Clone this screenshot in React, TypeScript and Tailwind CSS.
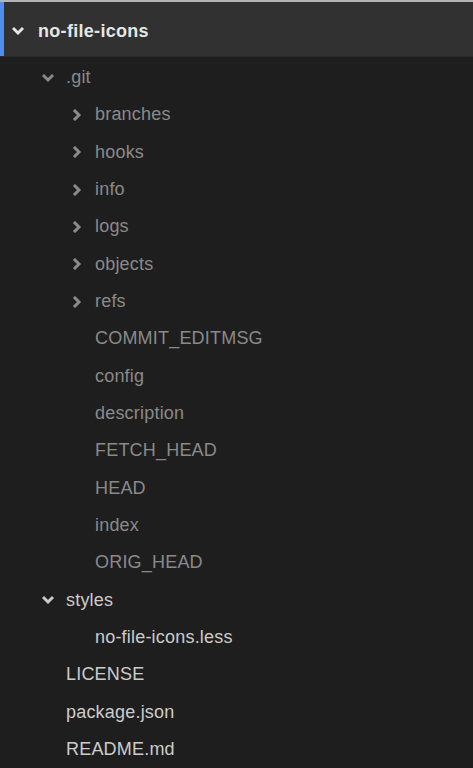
type Node = {
    name: string;
    level: number;
    folder?: 'open' | 'closed';
    dim?: boolean;
};

const rows: Node[] = [
    { name: '.git', level: 1, folder: 'open', dim: true },
    { name: 'branches', level: 2, folder: 'closed', dim: true },
    { name: 'hooks', level: 2, folder: 'closed', dim: true },
    { name: 'info', level: 2, folder: 'closed', dim: true },
    { name: 'logs', level: 2, folder: 'closed', dim: true },
    { name: 'objects', level: 2, folder: 'closed', dim: true },
    { name: 'refs', level: 2, folder: 'closed', dim: true },
    { name: 'COMMIT_EDITMSG', level: 2, dim: true },
    { name: 'config', level: 2, dim: true },
    { name: 'description', level: 2, dim: true },
    { name: 'FETCH_HEAD', level: 2, dim: true },
    { name: 'HEAD', level: 2, dim: true },
    { name: 'index', level: 2, dim: true },
    { name: 'ORIG_HEAD', level: 2, dim: true },
    { name: 'styles', level: 1, folder: 'open' },
    { name: 'no-file-icons.less', level: 2 },
    { name: 'LICENSE', level: 1 },
    { name: 'package.json', level: 1 },
    { name: 'README.md', level: 1 },
];

function Chevron({ open, className }: { open: boolean; className: string }) {
    return (
        <svg viewBox="0 0 12 12" className={className} fill="none" stroke="currentColor" strokeWidth="3" strokeLinecap="square">
            {open ? <polyline points="2,4 6,8 10,4" /> : <polyline points="4,2 8,6 4,10" />}
        </svg>
    );
}

export default function App() {
    return (
        <div className="w-[473px] h-[768px] overflow-hidden bg-[#1e1e1e] font-['Liberation_Sans',Arial,sans-serif] text-[18px]">
            <div className="h-[2px] bg-[#b4b4b4]" />
            <div className="relative h-[55px] bg-[#313131] border-b border-[#282828] flex items-center pt-[4px]">
                <div className="absolute left-0 top-0 bottom-0 w-[4px] bg-[#4d8ef0]" />
                <div className="w-[38px] flex justify-end pr-[14px]">
                    <Chevron open className="w-[12px] h-[12px] text-[#e6e6e6]" />
                </div>
                <span className="text-[#e6e6e6] font-bold tracking-[0.3px]">no-file-icons</span>
            </div>
            <div className="flex flex-col">
                {rows.map(row => {
                    const color = row.dim ? 'text-[#8a8a8a]' : 'text-[#cccccc]';
                    return (
                        <div key={row.name} className={`h-[37.33px] flex items-center pt-[4px] ${color}`}>
                            <div className={`${row.level === 1 ? 'w-[66px]' : 'w-[95px]'} flex justify-end pr-[12px] shrink-0`}>
                                {row.folder && (
                                    <Chevron open={row.folder === 'open'} className="w-[12px] h-[12px]" />
                                )}
                            </div>
                            <span className="tracking-[0.2px]">{row.name}</span>
                        </div>
                    );
                })}
            </div>
        </div>
    );
}
